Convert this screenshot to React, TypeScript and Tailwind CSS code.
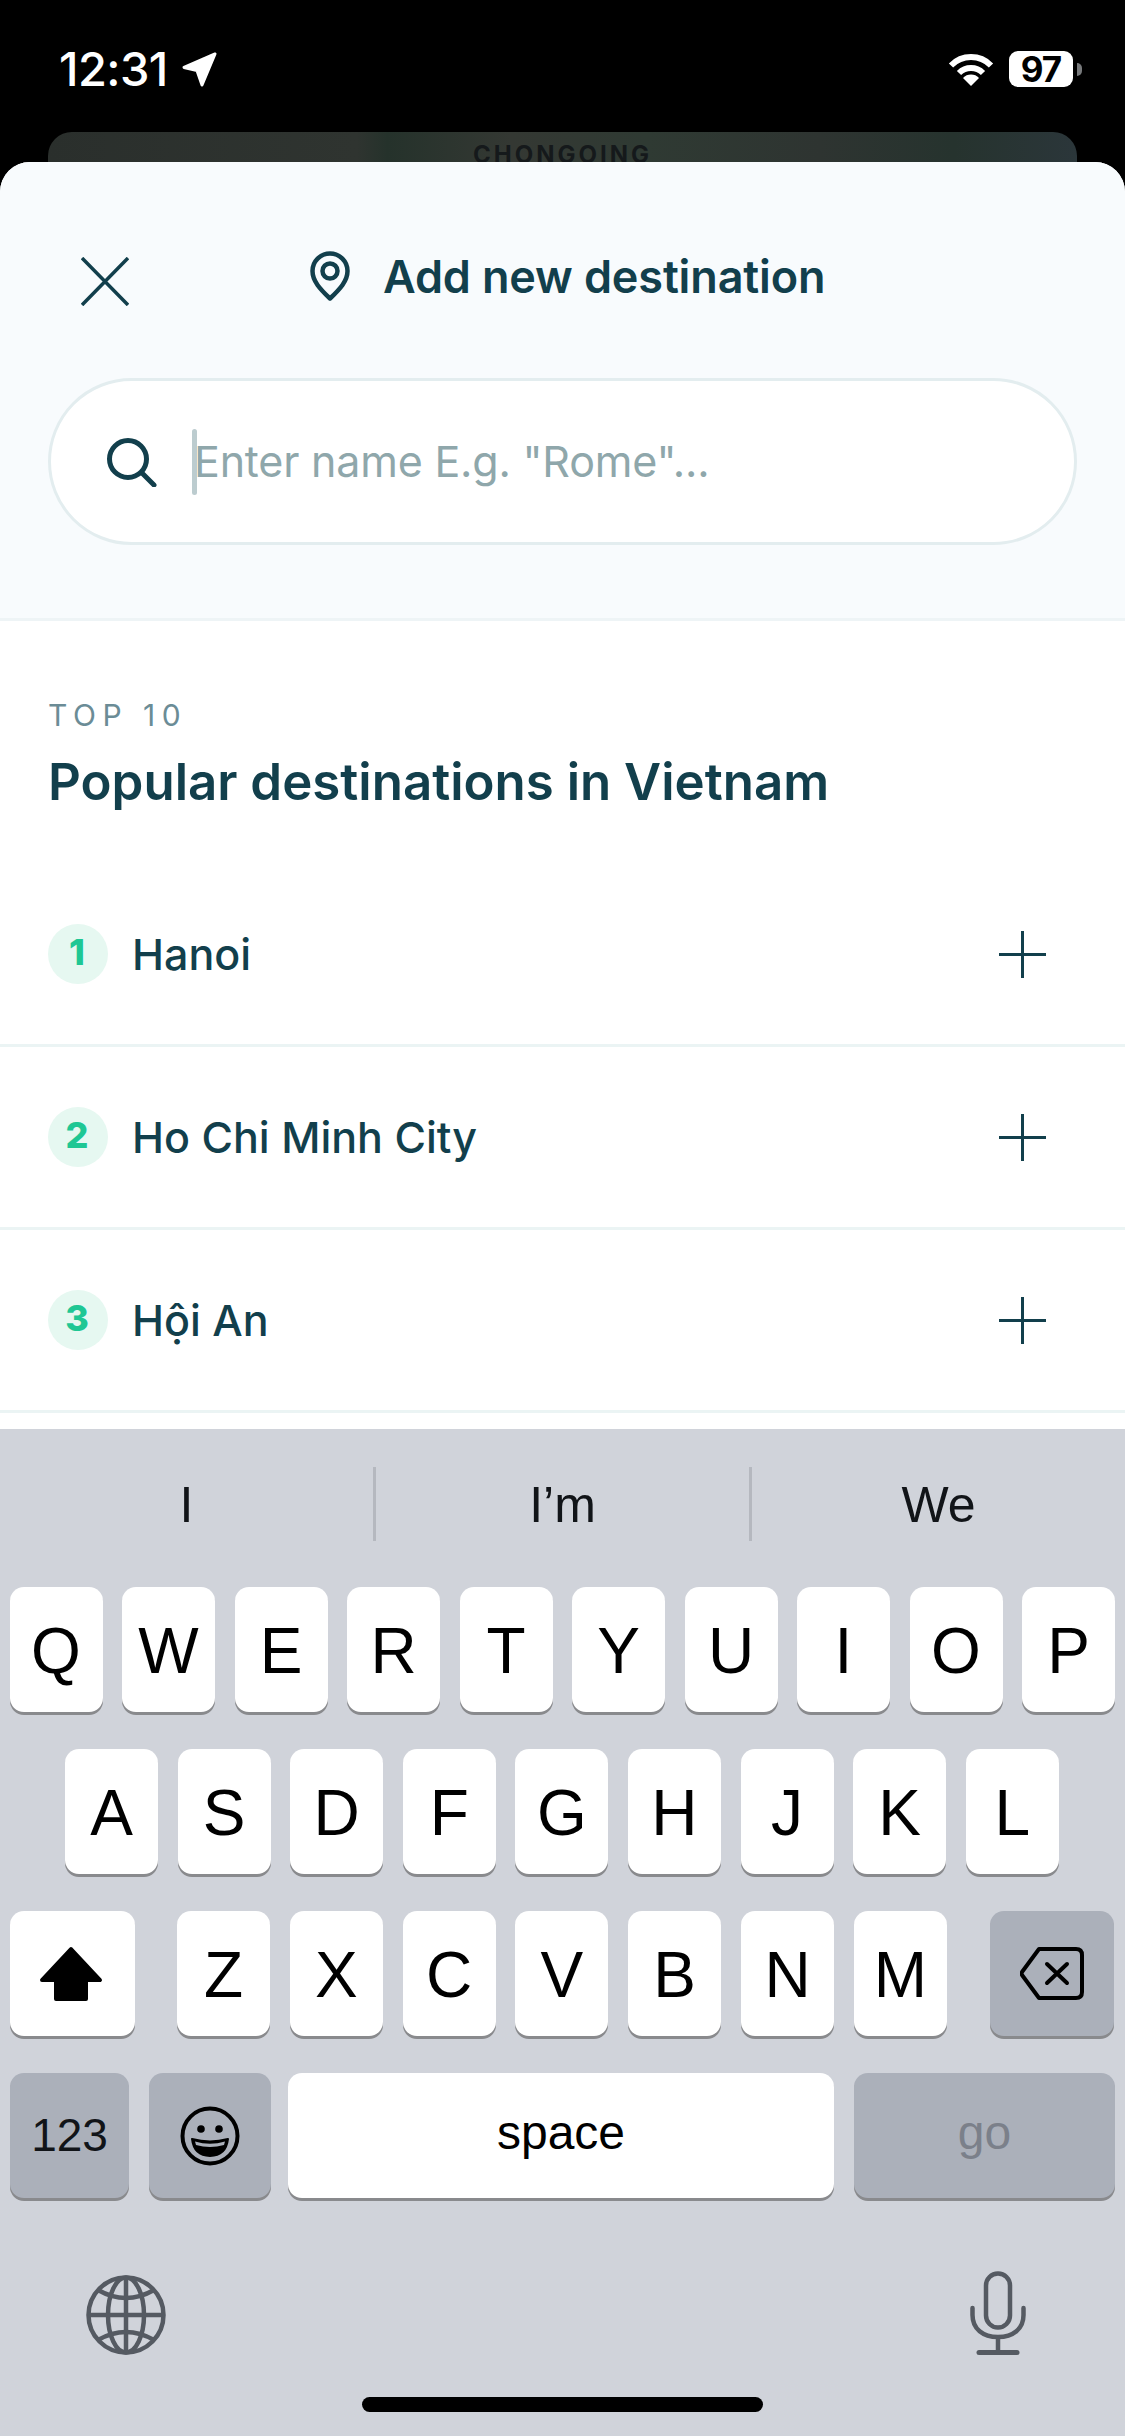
import React from "react";

const ink = "#123f4c";

const destinations = [
  { rank: 1, name: "Hanoi" },
  { rank: 2, name: "Ho Chi Minh City" },
  { rank: 3, name: "Hội An" },
];

const StatusBar = () => (
  <div className="flex h-[132px] flex-none items-start pl-[59px] pt-[43px] text-white">
    <span className="text-[47px] font-medium leading-[52px] tracking-[-0.6px]">12:31</span>
    <svg className="ml-[14px] mt-[9px]" width="35" height="35" viewBox="0 0 35 35">
      <path d="M33 2 L2 15.5 L15 18.5 L20 33 Z" fill="#fff" stroke="#fff" strokeWidth="3" strokeLinejoin="round" />
    </svg>
    <div className="ml-auto mr-[43px] mt-[8px] flex items-center">
      <svg width="46" height="33" viewBox="0 0 46 33" fill="none" stroke="#fff">
        <path d="M3 12.5 A28 28 0 0 1 43 12.5" strokeWidth="6" />
        <path d="M11 20 A17 17 0 0 1 35 20" strokeWidth="6" />
        <path d="M23 33 L15 25 A11 11 0 0 1 31 25 Z" fill="#fff" stroke="none" />
      </svg>
      <div className="ml-[15px] flex h-[36px] w-[64px] items-center justify-center rounded-[9px] bg-white text-[35px] font-bold leading-none tracking-[-1px] text-black">
        97
      </div>
      <div className="ml-[4px] h-[13px] w-[5px] rounded-r-full bg-[#77797b]" />
    </div>
  </div>
);

// sliver of the page behind the sheet
const PeekCard = () => (
  <div className="mx-[48px] h-[30px] flex-none overflow-hidden rounded-t-[24px] bg-[linear-gradient(90deg,#2a2f2c_0%,#2f3430_30%,#25322b_33%,#343833_45%,#2f3a33_58%,#2e3431_75%,#26332e_88%,#2b363a_100%)] pt-[10px] text-center text-[24px] font-bold leading-[26px] tracking-[3px] text-[#15191b]">
    CHONGOING
  </div>
);

const SheetHeader = () => (
  <div className="flex-none border-b-[3px] border-[#eef4f6] bg-[#f8fbfd] px-[48px] pb-[73px] pt-[66px]">
    <div className="flex h-[100px] items-center">
      <svg className="ml-[33px] mt-[7px]" width="48" height="49" viewBox="0 0 48 49" fill="none" stroke={ink} strokeWidth="3.5">
        <path d="M1 1 L47 48 M47 1 L1 48" />
      </svg>
      <svg className="mb-[4px] ml-[181px]" width="40" height="50" viewBox="0 0 40 50" fill="none" stroke={ink} strokeWidth="4.5">
        <path d="M20 47.5 C10 38 2.5 30 2.5 20 A17.5 17.5 0 0 1 37.5 20 C37.5 30 30 38 20 47.5 Z" strokeLinejoin="round" />
        <circle cx="20" cy="20" r="7.5" />
      </svg>
      <span className="mb-[3px] ml-[33px] text-[45px] font-semibold leading-none tracking-[-0.15px] text-[#123f4c]">
        Add new destination
      </span>
    </div>
    <div className="mt-[50px] flex h-[167px] items-center rounded-full border-[3px] border-[#e3edef] bg-white pl-[55px]">
      <svg width="51" height="50" viewBox="0 0 51 50" fill="none" stroke={ink} strokeWidth="5" strokeLinecap="round">
        <circle cx="22" cy="22" r="18.5" />
        <path d="M36 36 L48 48" />
      </svg>
      <div className="ml-[35px] h-[66px] w-[5px] flex-none rounded-full bg-[#bccccf]" />
      <input
        className="ml-[-3px] min-w-0 flex-1 bg-transparent text-[43px] tracking-[-0.2px] outline-none placeholder:text-[#8fa7ab]"
        placeholder={'Enter name E.g. "Rome"...'}
      />
    </div>
  </div>
);

const DestinationRow = ({ rank, name }: { rank: number; name: string }) => (
  <div className="flex h-[183px] items-center border-b-[3px] border-[#ebf4f4] pl-[48px] pr-[79px]">
    <div className="flex h-[60px] w-[60px] items-center justify-center rounded-full bg-[#e6f8f1] pb-[4px] pr-[2px] text-[36px] font-extrabold text-[#1fc794]">
      {rank}
    </div>
    <span className="ml-[24px] text-[43px] font-medium text-[#123f4c]">{name}</span>
    <svg className="ml-auto" width="47" height="47" viewBox="0 0 47 47" stroke={ink} strokeWidth="3">
      <path d="M23.5 0 V47 M0 23.5 H47" />
    </svg>
  </div>
);

const Sheet = () => (
  <div className="flex min-h-0 flex-1 flex-col overflow-hidden rounded-t-[30px] bg-white">
    <SheetHeader />
    <div className="px-[48px] pt-[76px]">
      <div className="text-[30px] leading-[36px] tracking-[6.5px] text-[#6b8c96]">TOP 10</div>
      <h1 className="mt-[17px] text-[51px] font-semibold leading-[64px] text-[#123f4c]">
        Popular destinations in Vietnam
      </h1>
    </div>
    <div className="mt-[50px]">
      {destinations.map((d) => (
        <DestinationRow key={d.rank} {...d} />
      ))}
    </div>
  </div>
);

const keyFont = "font-['Liberation_Sans',sans-serif]";

const Key = ({ label }: { label: string }) => (
  <div className="flex h-[125px] w-[93px] flex-none items-center justify-center rounded-[14px] bg-white pt-[3px] text-[64px] leading-none text-black shadow-[0_3px_0_#898a8d]">
    {label}
  </div>
);

const Keyboard = () => (
  <div className={`flex h-[1007px] flex-none flex-col bg-[#d0d3da] ${keyFont}`}>
    <div className="mb-[46px] mt-[38px] flex h-[74px] text-[50px] leading-none text-[#111418]">
      <div className="flex flex-1 items-center justify-center border-r-[3px] border-[#b5b8bf] pt-[2px]">I</div>
      <div className="flex flex-1 items-center justify-center border-r-[3px] border-[#b5b8bf] pt-[2px]">I’m</div>
      <div className="flex flex-1 items-center justify-center pt-[2px]">We</div>
    </div>

    <div className="flex flex-col gap-[37px]">
      <div className="flex gap-[19.5px] pl-[9.5px]">
        {"QWERTYUIOP".split("").map((c) => (
          <Key key={c} label={c} />
        ))}
      </div>
      <div className="flex gap-[19.6px] pl-[65px]">
        {"ASDFGHJKL".split("").map((c) => (
          <Key key={c} label={c} />
        ))}
      </div>
      <div className="flex pl-[10px]">
        <div className="flex h-[125px] w-[125px] items-center justify-center rounded-[14px] bg-white pr-[4px] shadow-[0_3px_0_#898a8d]">
          <svg width="64" height="56" viewBox="0 0 64 56">
            <path d="M32 3 L61 34 H47 V53 H17 V34 H3 Z" fill="#000" stroke="#000" strokeWidth="4" strokeLinejoin="round" />
          </svg>
        </div>
        <div className="ml-[42px] flex gap-[19.8px]">
          {"ZXCVBNM".split("").map((c) => (
            <Key key={c} label={c} />
          ))}
        </div>
        <div className="ml-[43px] flex h-[125px] w-[124px] items-center justify-center rounded-[14px] bg-[#abb0ba] shadow-[0_3px_0_#898a8d]">
          <svg width="64" height="53" viewBox="0 0 64 53" fill="none" stroke="#000" strokeWidth="4" strokeLinejoin="round" strokeLinecap="round">
            <path d="M19 2 H56 Q62 2 62 8 V45 Q62 51 56 51 H19 L2 28 Q1 26.5 2 25 Z" />
            <path d="M27 17 L47 36 M47 17 L27 36" />
          </svg>
        </div>
      </div>
      <div className="flex pl-[10px]">
        <div className="flex h-[125px] w-[119px] items-center justify-center rounded-[14px] bg-[#abb0ba] text-[46px] text-[#111418] shadow-[0_3px_0_#898a8d]">
          123
        </div>
        <div className="ml-[20px] flex h-[125px] w-[122px] items-center justify-center rounded-[14px] bg-[#abb0ba] shadow-[0_3px_0_#898a8d]">
          <svg width="60" height="60" viewBox="0 0 60 60">
            <circle cx="30" cy="30" r="27.5" fill="none" stroke="#000" strokeWidth="4" />
            <circle cx="21" cy="23" r="3.8" fill="#000" />
            <circle cx="39" cy="23" r="3.8" fill="#000" />
            <path d="M12 33 Q30 38 48 33 Q46 50 30 50 Q14 50 12 33 Z" fill="#000" stroke="#000" strokeWidth="2" strokeLinejoin="round" />
            <path d="M15 35.5 Q30 40 45 35.5 L44 39 Q30 43 16 39 Z" fill="#abb0ba" />
          </svg>
        </div>
        <div className="ml-[17px] flex h-[125px] w-[546px] items-center justify-center rounded-[14px] bg-white pb-[6px] text-[48px] text-black shadow-[0_3px_0_#898a8d]">
          space
        </div>
        <div className="ml-[20px] flex h-[125px] w-[261px] items-center justify-center rounded-[14px] bg-[#abb0ba] pb-[6px] text-[48px] text-[#7b808a] shadow-[0_3px_0_#898a8d]">
          go
        </div>
      </div>
    </div>

    <div className="mt-[73px] flex h-[84px] items-end justify-between pl-[86px] pr-[99px]">
      <svg width="80" height="80" viewBox="0 0 80 80" fill="none" stroke="#555a62" strokeWidth="4.5">
        <circle cx="40" cy="40" r="37.5" />
        <ellipse cx="40" cy="40" rx="18" ry="37.5" />
        <path d="M40 2.5 V77.5 M2.5 40 H77.5" />
        <path d="M12 15 Q40 31 68 15 M12 65 Q40 49 68 65" />
      </svg>
      <svg width="56" height="84" viewBox="0 0 56 84" fill="none" stroke="#555a62" strokeWidth="4.5" strokeLinecap="round">
        <rect x="16" y="2.5" width="24" height="54" rx="12" />
        <path d="M2.5 37 V44 C2.5 58 13 66 28 66 C43 66 53.5 58 53.5 44 V37" />
        <path d="M28 66 V81" strokeLinecap="butt" />
        <path d="M9 81.5 H47" strokeWidth="5" strokeLinecap="round" />
      </svg>
    </div>
    <div className="mx-auto mt-[42px] h-[15px] w-[401px] flex-none rounded-full bg-black" />
  </div>
);

export default function App() {
  return (
    <div className="flex h-[2436px] w-[1125px] flex-col overflow-hidden bg-black font-['Inter',sans-serif]">
      <StatusBar />
      <PeekCard />
      <Sheet />
      <Keyboard />
    </div>
  );
}
